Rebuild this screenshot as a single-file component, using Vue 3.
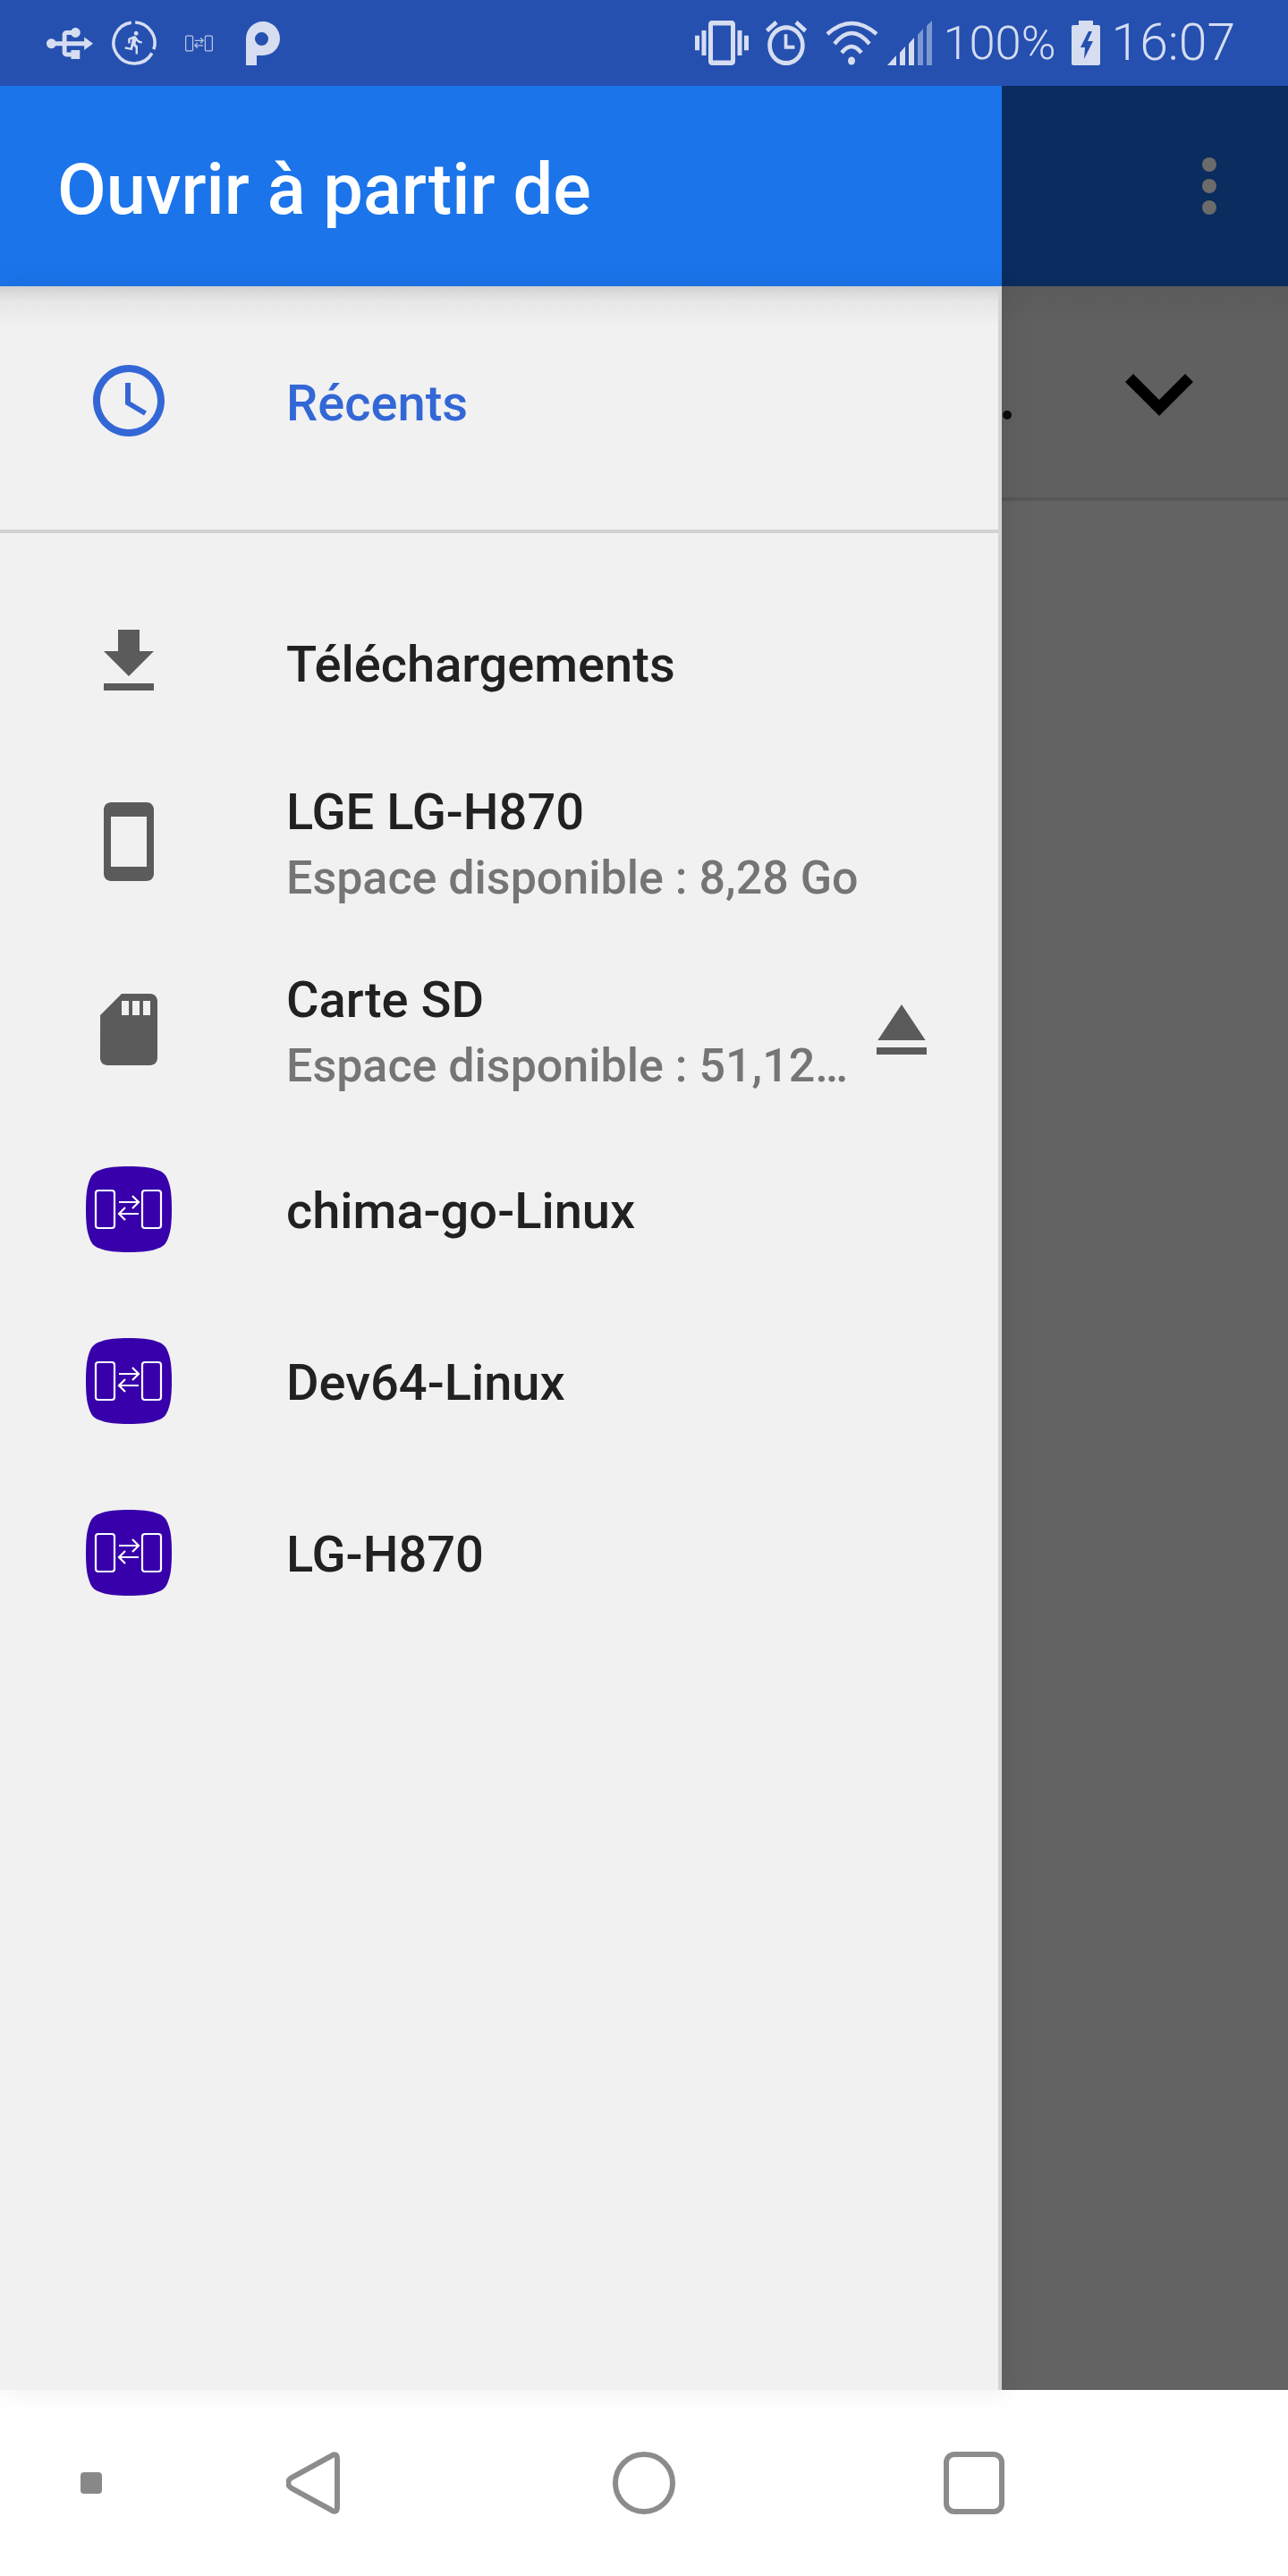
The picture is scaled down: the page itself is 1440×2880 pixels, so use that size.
<script setup>
const mirrors = ['chima-go-Linux', 'Dev64-Linux', 'LG-H870'];
</script>

<template>
  <div class="phone">
    <!-- Status bar -->
    <div class="status">
      <svg class="st-usb" viewBox="0 0 21.2 14.2"><path transform="translate(22.2,-4.8) rotate(90)" d="M15 7v4h1v2h-3V5h2l-3-4-3 4h2v8H8v-2.07c.7-.37 1.2-1.08 1.2-1.93 0-1.21-.99-2.2-2.2-2.2-1.21 0-2.2.99-2.2 2.2 0 .85.5 1.56 1.2 1.93V13c0 1.11.89 2 2 2h3v3.05c-.71.37-1.2 1.1-1.2 1.95 0 1.22.99 2.2 2.2 2.2 1.21 0 2.2-.98 2.2-2.2 0-.85-.49-1.58-1.2-1.95V15h3c1.11 0 2-.89 2-2v-2h1V7h-4z"/></svg>
      <svg class="st-run" viewBox="0 0 50 50">
        <path class="ring" d="M26.2 2.03A23 23 0 0 1 46.9 32.1M44.9 36.5A23 23 0 1 1 21.8 2.2"/>
        <path transform="translate(11,10) scale(1.2)" d="M13.49 5.48c1.1 0 2-.9 2-2s-.9-2-2-2-2 .9-2 2 .9 2 2 2zm-3.6 13.9l1-4.4 2.1 2v6h2v-7.5l-2.1-2 .6-3c1.3 1.5 3.3 2.5 5.5 2.5v-2c-1.9 0-3.5-1-4.3-2.4l-1-1.6c-.4-.6-1-1-1.7-1-.3 0-.5.1-.8.1l-5.2 2.2v4.7h2v-3.4l1.8-.7-1.6 8.1-4.9-1-.4 2 7 1.4z"/>
      </svg>
      <svg class="st-swap" viewBox="0 0 74 43">
        <rect x="1.5" y="1.5" width="19" height="40" rx="3"/>
        <rect x="53.5" y="1.5" width="19" height="40" rx="3"/>
        <path d="M26 14H48M41 7L48 14L41 21M48 27H26M33 20L26 27L33 34"/>
      </svg>
      <svg class="st-p" viewBox="0 0 38 49"><path fill-rule="evenodd" d="M12 49H0V19A19 19 0 1 1 19 38H12ZM17.5 12a7.5 7.5 0 1 0 0 15 7.5 7.5 0 0 0 0-15z"/></svg>

      <div class="status-right">
        <svg class="st-vib" viewBox="0 3 24 18" preserveAspectRatio="none"><path d="M0 15h2V9H0v6zm3 2h2V7H3v10zm19-8v6h2V9h-2zm-3 8h2V7h-2v10zM16.5 3h-9C6.67 3 6 3.67 6 4.5v15c0 .83.67 1.5 1.5 1.5h9c.83 0 1.5-.67 1.5-1.5v-15c0-.83-.67-1.5-1.5-1.5zM16 19H8V5h8v14z"/></svg>
        <svg class="st-alarm" viewBox="2 1.86 20 20.14" preserveAspectRatio="none"><path d="M22 5.72l-4.6-3.86-1.29 1.53 4.6 3.86L22 5.72zM7.88 3.39L6.6 1.86 2 5.71l1.29 1.53 4.59-3.85zM11 8h1.6v5h3.5v1.6H11zM12 4c-4.97 0-9 4.03-9 9s4.02 9 9 9c4.97 0 9-4.03 9-9s-4.03-9-9-9zm0 16c-3.87 0-7-3.13-7-7s3.13-7 7-7 7 3.13 7 7-3.13 7-7 7z"/></svg>
        <svg class="st-wifi" viewBox="0 0 59 50">
          <path d="M2 15Q29 -9 57 15M10 26Q29 2 49 26M18 36Q29 22 40 36"/>
          <ellipse cx="29" cy="45" rx="4" ry="4.5"/>
        </svg>
        <svg class="st-signal" viewBox="0 0 50 50">
          <polygon points="0,50 10,39 10,50"/>
          <polygon points="14,50 14,36 20,29 20,50"/>
          <polygon points="24,50 24,26 30,19 30,50"/>
          <polygon class="dim" points="34,50 34,16 40,9 40,50"/>
          <polygon class="dim" points="44,50 44,6 50,0 50,50"/>
        </svg>
        <span class="st-pct">100%</span>
        <svg class="st-batt" viewBox="0 0 32 50"><path fill-rule="evenodd" d="M8 0H24V5H30Q32 5 32 7V48Q32 50 30 50H2Q0 50 0 48V7Q0 5 2 5H8ZM19 12L10 30H15L14 43L24 23H18L23 12Z"/></svg>
        <span class="st-time">16:07</span>
      </div>
    </div>

    <div class="main">
      <!-- Drawer -->
      <div class="drawer">
        <div class="drawer-bar">Ouvrir à partir de</div>
        <div class="drawer-body">
          <div class="recents">
            <svg class="ico ico-round" viewBox="0 0 24 24"><path d="M11.99 2C6.47 2 2 6.48 2 12s4.47 10 9.99 10C17.52 22 22 17.52 22 12S17.52 2 11.99 2zM12 20c-4.42 0-8-3.58-8-8s3.58-8 8-8 8 3.58 8 8-3.58 8-8 8z"/><path d="M12.5 7H11v6l5.25 3.15.75-1.23-4.5-2.67z"/></svg>
            <span class="item-title">Récents</span>
          </div>

          <div class="roots">
            <div class="root root-single">
              <svg class="ico" viewBox="0 0 24 24"><path d="M19 9h-4V3H9v6H5l7 7 7-7zM5 18v2h14v-2H5z"/></svg>
              <span class="item-title">Téléchargements</span>
            </div>

            <div class="root root-double">
              <svg class="ico" viewBox="0 0 24 24"><path d="M17 1.01L7 1c-1.1 0-2 .9-2 2v18c0 1.1.9 2 2 2h10c1.1 0 2-.9 2-2V3c0-1.1-.9-1.99-2-1.99zM17 19H7V5h10v14z"/></svg>
              <div class="texts">
                <div class="item-title">LGE LG-H870</div>
                <div class="item-sub">Espace disponible : 8,28 Go</div>
              </div>
            </div>

            <div class="root root-double">
              <svg class="ico" viewBox="0 0 24 24"><path d="M18 2h-8L4.02 8 4 20c0 1.1.9 2 2 2h12c1.1 0 2-.9 2-2V4c0-1.1-.9-2-2-2zm-6 6h-2V4h2v4zm3 0h-2V4h2v4zm3 0h-2V4h2v4z"/></svg>
              <div class="texts">
                <div class="item-title">Carte SD</div>
                <div class="item-sub">Espace disponible : 51,12…</div>
              </div>
              <svg class="eject" viewBox="0 0 24 24"><path d="M5 17h14v2H5zm7-12L5.33 15h13.34z"/></svg>
            </div>

            <div v-for="name in mirrors" :key="name" class="root root-mirror">
              <svg class="ico-mirror" viewBox="0 0 96 96">
                <path class="squircle" d="M48 0C62 0 71 1 77 3C87 6 90 9 93 19C95 25 96 34 96 48C96 62 95 71 93 77C90 87 87 90 77 93C71 95 62 96 48 96C34 96 25 95 19 93C9 90 6 87 3 77C1 71 0 62 0 48C0 34 1 25 3 19C6 9 9 6 19 3C25 1 34 0 48 0Z"/>
                <rect x="11" y="27" width="21" height="42" rx="3"/>
                <rect x="63" y="27" width="21" height="42" rx="3"/>
                <path d="M37 40H59M52 33L59 40L52 47M59 53H37M44 46L37 53L44 60"/>
              </svg>
              <span class="item-title">{{ name }}</span>
            </div>
          </div>
        </div>
      </div>

      <!-- Dimmed activity behind the drawer -->
      <div class="behind">
        <div class="behind-bar">
          <span class="dot"></span>
          <span class="dot"></span>
          <span class="dot"></span>
        </div>
        <div class="behind-sort">
          <span class="sort-dot"></span>
          <svg class="chevron" viewBox="0 0 76 47"><polygon points="0,9 9,0 38,29 67,0 76,9 38,47"/></svg>
        </div>
        <div class="behind-rest"></div>
      </div>
    </div>

    <!-- Navigation bar -->
    <div class="nav">
      <span class="nav-small"></span>
      <svg class="nav-back" viewBox="0 0 60 70"><path d="M56 4C54 3 52 3 50 5L6 29C1 32 1 38 6 41L50 65C52 67 54 67 56 66C57 65 57 63 57 61V9C57 7 57 5 56 4Z"/></svg>
      <span class="nav-home"></span>
      <span class="nav-recent"></span>
    </div>
  </div>
</template>

<style>
body {
  margin: 0;
}
</style>

<style scoped>
.phone {
  width: 1440px;
  height: 2880px;
  display: flex;
  flex-direction: column;
  font-family: Roboto, "Liberation Sans", sans-serif;
  overflow: hidden;
}

.status {
  height: 96px;
  flex: none;
  display: flex;
  align-items: center;
  padding: 0 59px 0 52px;
  box-sizing: border-box;
  background: #2550b0;
  color: #d6ddf1;
  fill: #d6ddf1;
}

.status svg {
  flex: none;
  display: block;
}

.st-usb {
  width: 52px;
  height: 35px;
}

.st-run {
  width: 50px;
  height: 50px;
  margin-left: 21px;
}

.ring {
  fill: none;
  stroke: #d6ddf1;
  stroke-width: 3.5;
}

.st-swap {
  width: 31px;
  height: 19px;
  margin-left: 32px;
  fill: none;
  stroke: #b9c5e6;
  stroke-width: 3;
}

.st-p {
  width: 38px;
  height: 49px;
  margin-left: 37px;
}

.status-right {
  margin-left: auto;
  display: flex;
  align-items: center;
}

.st-vib {
  width: 60px;
  height: 50px;
}

.st-alarm {
  width: 46px;
  height: 50px;
  margin-left: 19px;
}

.st-wifi {
  width: 59px;
  height: 50px;
  margin-left: 21px;
}

.st-wifi path {
  fill: none;
  stroke: #d6ddf1;
  stroke-width: 4.5;
}

.st-signal {
  width: 50px;
  height: 50px;
  margin-left: 10px;
}

.st-signal .dim {
  opacity: 0.5;
}

.st-pct {
  margin-left: 12px;
  font-size: 52.5px;
  font-weight: 300;
  line-height: 50px;
}

.st-batt {
  width: 32px;
  height: 50px;
  margin-left: 17px;
}

.st-time {
  margin-left: 13px;
  font-size: 57px;
  font-weight: 300;
  line-height: 50px;
}

.main {
  flex: 1;
  min-height: 0;
  display: flex;
}

.drawer {
  width: 1120px;
  flex: none;
  display: flex;
  flex-direction: column;
  position: relative;
  z-index: 1;
}

.drawer-bar {
  height: 224px;
  flex: none;
  box-sizing: border-box;
  padding: 6px 0 0 64px;
  display: flex;
  align-items: center;
  background: #1b74ea;
  color: #fff;
  font-size: 79.5px;
  font-weight: 500;
}

.drawer-body {
  flex: 1;
  background: linear-gradient(#d0d0d0, #e6e6e6 16px, #f1f1f1 44px);
  border-right: 4px solid #d4d4d4;
  box-shadow: 6px 0 30px rgba(0, 0, 0, 0.08);
}

.recents {
  height: 276px;
  box-sizing: border-box;
  padding: 0 0 16px 96px;
  display: flex;
  align-items: center;
  border-bottom: 4px solid #d2d2d2;
}

.recents .item-title {
  color: #3367d6;
  margin-left: 128px;
  padding-top: 6px;
}

.ico {
  width: 96px;
  height: 96px;
  flex: none;
  fill: #5b5b5b;
}

.ico-round {
  fill: #3367d6;
}

.item-title {
  font-size: 56px;
  font-weight: 500;
  line-height: 74px;
  color: #212121;
}

.item-sub {
  font-size: 52px;
  font-weight: 500;
  line-height: 74px;
  color: #757575;
  white-space: nowrap;
}

.roots {
  padding-top: 48px;
}

.root {
  display: flex;
  align-items: center;
  padding-left: 96px;
}

.root > .item-title {
  margin-left: 128px;
  padding-top: 6px;
}

.root-single {
  height: 192px;
}

.root-double {
  height: 210px;
}

.texts {
  flex: 1;
  min-width: 0;
  margin-left: 128px;
  padding-top: 8px;
}

.eject {
  width: 96px;
  height: 96px;
  flex: none;
  margin: 0 60px 0 0;
  fill: #5b5b5b;
}

.root-mirror {
  height: 192px;
}

.root-mirror .item-title {
  padding-top: 4px;
}

.ico-mirror {
  width: 96px;
  height: 96px;
  flex: none;
  fill: none;
  stroke: #fff;
  stroke-width: 2.2;
}

.squircle {
  fill: #3700ab;
  stroke: none;
}

.behind {
  flex: 1;
  display: flex;
  flex-direction: column;
}

.behind-bar {
  height: 224px;
  flex: none;
  background: #0a2c5e;
  display: flex;
  flex-direction: column;
  align-items: flex-end;
  justify-content: center;
  gap: 8px;
  padding-right: 80px;
  box-sizing: border-box;
}

.dot {
  width: 16px;
  height: 16px;
  border-radius: 50%;
  background: #6b6b6b;
}

.behind-sort {
  height: 240px;
  flex: none;
  box-sizing: border-box;
  background: linear-gradient(#5b5b5b, #606060 40px);
  border-bottom: 4px solid #575757;
  display: flex;
  padding-left: 1px;
}

.sort-dot {
  width: 10px;
  height: 10px;
  border-radius: 50%;
  background: #0c0c0c;
  margin-top: 139px;
}

.chevron {
  width: 76px;
  height: 47px;
  margin: 98px 0 0 127px;
  fill: #000;
}

.behind-rest {
  flex: 1;
  background: #636363;
}

.nav {
  height: 208px;
  flex: none;
  background: #fff;
  display: flex;
  align-items: center;
  padding-left: 90px;
  box-sizing: border-box;
}

.nav-small {
  width: 24px;
  height: 24px;
  border-radius: 4px;
  background: #888;
}

.nav-back {
  width: 60px;
  height: 70px;
  margin-left: 206px;
  fill: none;
  stroke: #8c8c8c;
  stroke-width: 6;
}

.nav-home {
  width: 70px;
  height: 70px;
  box-sizing: border-box;
  margin-left: 305px;
  border: 6px solid #8c8c8c;
  border-radius: 50%;
}

.nav-recent {
  width: 68px;
  height: 70px;
  box-sizing: border-box;
  margin-left: 300px;
  border: 6px solid #8c8c8c;
  border-radius: 12px;
}
</style>
